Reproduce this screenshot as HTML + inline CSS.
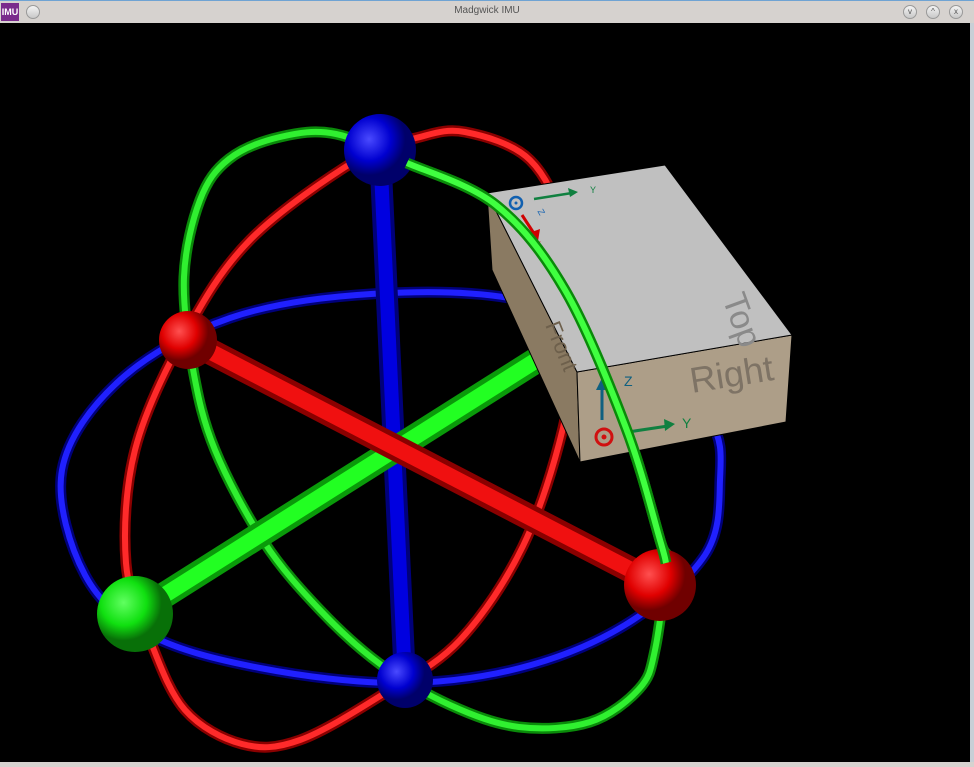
<!DOCTYPE html>
<html><head><meta charset="utf-8"><style>
html,body{margin:0;padding:0;width:974px;height:767px;overflow:hidden;background:#000;font-family:"Liberation Sans",sans-serif}
#tb{position:absolute;left:0;top:0;width:974px;height:23px;background:#d6d2cf;border-top:1px solid #6fa3d3;box-sizing:border-box}
#tb .t{position:absolute;left:0;width:974px;top:4px;text-align:center;font-size:10px;color:#555}
.ic{position:absolute;top:4px;width:14px;height:14px;border-radius:50%;background:linear-gradient(#f4f4f4,#c8c8c8);border:1px solid #999;box-sizing:border-box;font-size:8px;text-align:center;line-height:12px;color:#555}
</style></head><body>
<div id="tb">
<div style="position:absolute;left:1px;top:2px;width:18px;height:18px;background:#7a2a8c;color:#fff;font-size:9px;line-height:18px;text-align:center;font-weight:bold">IMU</div>
<div class="ic" style="left:26px"></div>
<div class="t">Madgwick IMU</div>
<div class="ic" style="left:903px">v</div>
<div class="ic" style="left:926px">^</div>
<div class="ic" style="left:949px">x</div>
</div>
<div style="position:absolute;left:970px;top:23px;width:4px;height:744px;background:#c8cfd6"></div>
<div style="position:absolute;left:0;top:762px;width:974px;height:5px;background:#d6d2cf"></div>
<svg width="974" height="767" style="position:absolute;left:0;top:0">
<defs>
<radialGradient id="gb" cx="35%" cy="35%"><stop offset="0" stop-color="#4a4aff"/><stop offset=".6" stop-color="#0000d0"/><stop offset="1" stop-color="#00006a"/></radialGradient>
<radialGradient id="gr" cx="35%" cy="35%"><stop offset="0" stop-color="#ff5050"/><stop offset=".6" stop-color="#e00000"/><stop offset="1" stop-color="#700000"/></radialGradient>
<radialGradient id="gg" cx="35%" cy="35%"><stop offset="0" stop-color="#60ff60"/><stop offset=".6" stop-color="#10e010"/><stop offset="1" stop-color="#087008"/></radialGradient>
</defs>
<g id="rings" fill="none"></g>
<g stroke-linecap="butt">
<line x1="380" y1="150" x2="405" y2="680" stroke="#00007a" stroke-width="22"/>
<line x1="380" y1="150" x2="405" y2="680" stroke="#0000e0" stroke-width="14"/>
<line x1="133" y1="615" x2="600" y2="320" stroke="#0a9a0a" stroke-width="26"/>
<line x1="133" y1="615" x2="600" y2="320" stroke="#22ff22" stroke-width="16"/>
<line x1="188" y1="340" x2="660" y2="585" stroke="#8a0000" stroke-width="26"/>
<line x1="188" y1="340" x2="660" y2="585" stroke="#f01010" stroke-width="16"/>
</g>
<circle cx="380" cy="150" r="36" fill="url(#gb)"/>
<circle cx="405" cy="680" r="28" fill="url(#gb)"/>
<circle cx="188" cy="340" r="29" fill="url(#gr)"/>
<circle cx="660" cy="585" r="36" fill="url(#gr)"/>
<circle cx="135" cy="614" r="38" fill="url(#gg)"/>
<polygon points="487,193 492,270 580,462 577,372" fill="#8a7a62" stroke="#000" stroke-width="1"/>
<polygon points="577,372 792,335 786,422 580,462" fill="#ad9e88" stroke="#000" stroke-width="1"/>
<polygon points="487,193 665,165 792,335 577,372" fill="#c0c0c0" stroke="#000" stroke-width="1"/>
<text x="0" y="0" transform="translate(722,298) rotate(70)" font-family="Liberation Sans" font-size="34" fill="#8a8a8a">Top</text>
<text x="0" y="0" transform="translate(692,393) rotate(-9)" font-family="Liberation Sans" font-size="36" fill="#7e7365">Right</text>
<text x="0" y="0" transform="translate(545,325) rotate(68)" font-family="Liberation Sans" font-size="22" fill="#6e604c">Front</text>
<circle cx="516" cy="203" r="6" fill="none" stroke="#1060b0" stroke-width="2.5"/><circle cx="516" cy="203" r="1.5" fill="#1060b0"/>
<line x1="534" y1="199" x2="572" y2="193" stroke="#108040" stroke-width="2.5"/><polygon points="578,192 568,188 570,197" fill="#108040"/>
<text x="590" y="193" font-size="9" fill="#108040">Y</text>
<text x="538" y="214" font-size="9" fill="#1060b0" transform="rotate(60 540 212)">Z</text>
<line x1="522" y1="215" x2="535" y2="235" stroke="#d00000" stroke-width="3"/><polygon points="538,241 529,233 540,229" fill="#d00000"/>
<text x="535" y="248" font-size="9" fill="#d00000">X</text>
<line x1="602" y1="420" x2="602" y2="386" stroke="#106080" stroke-width="3"/><polygon points="602,378 596,390 608,390" fill="#106080"/>
<text x="624" y="386" font-size="14" fill="#106080">Z</text>
<circle cx="604" cy="437" r="8" fill="none" stroke="#d01010" stroke-width="3"/><circle cx="604" cy="437" r="2.5" fill="#d01010"/>
<line x1="628" y1="432" x2="668" y2="426" stroke="#108040" stroke-width="3"/><polygon points="675,424 664,419 665,431" fill="#108040"/>
<text x="682" y="428" font-size="14" fill="#108040">Y</text>
<g id="over" fill="none"></g>
</svg>
<script>
function cr(p,closed){var n=p.length,d="M"+p[0][0]+","+p[0][1];var m=closed?n:n-1;
for(var i=0;i<m;i++){var p0=p[(i-1+n)%n],p1=p[i],p2=p[(i+1)%n],p3=p[(i+2)%n];
if(!closed){if(i==0)p0=p1;if(i+2>=n)p3=p2;}
d+="C"+(p1[0]+(p2[0]-p0[0])/6)+","+(p1[1]+(p2[1]-p0[1])/6)+" "+(p2[0]-(p3[0]-p1[0])/6)+","+(p2[1]-(p3[1]-p1[1])/6)+" "+p2[0]+","+p2[1];}
return d;}
function ring(g,pts,dark,light,closed){var ns="http://www.w3.org/2000/svg";
[[dark,11],[light,6]].forEach(function(s){var e=document.createElementNS(ns,"path");e.setAttribute("d",cr(pts,closed));e.setAttribute("stroke",s[0]);e.setAttribute("stroke-width",s[1]);e.setAttribute("fill","none");g.appendChild(e);});}
var R=document.getElementById("rings"),O=document.getElementById("over");
var blue=[[62,470],[120,380],[230,318],[371,294],[520,300],[640,350],[710,420],[720,480],[705,555],[625,625],[520,668],[398,683],[260,668],[150,635],[85,575]];
var red=[[416,138],[465,132],[530,160],[565,230],[575,330],[563,428],[523,546],[460,640],[385,693],[300,740],[242,744],[185,710],[150,640],[126,563],[135,450],[184,336],[250,240],[358,159]];
var green=[[336,134],[407,163],[496,205],[565,290],[626,428],[660,540],[666,563],[655,650],[639,689],[590,722],[519,727],[450,705],[380,664],[320,610],[264,542],[215,450],[193,369],[184,277],[200,200],[229,159],[280,137]];
ring(R,blue,"#00007a","#2020ff",true);
ring(R,red,"#8a0000","#ff2a2a",true);
ring(R,green,"#0a8a0a","#30f030",true);
ring(O,[[407,163],[496,205],[565,290],[626,428],[660,540],[666,563]],"#0a8a0a","#40ff40",false);
</script>
</body></html>
